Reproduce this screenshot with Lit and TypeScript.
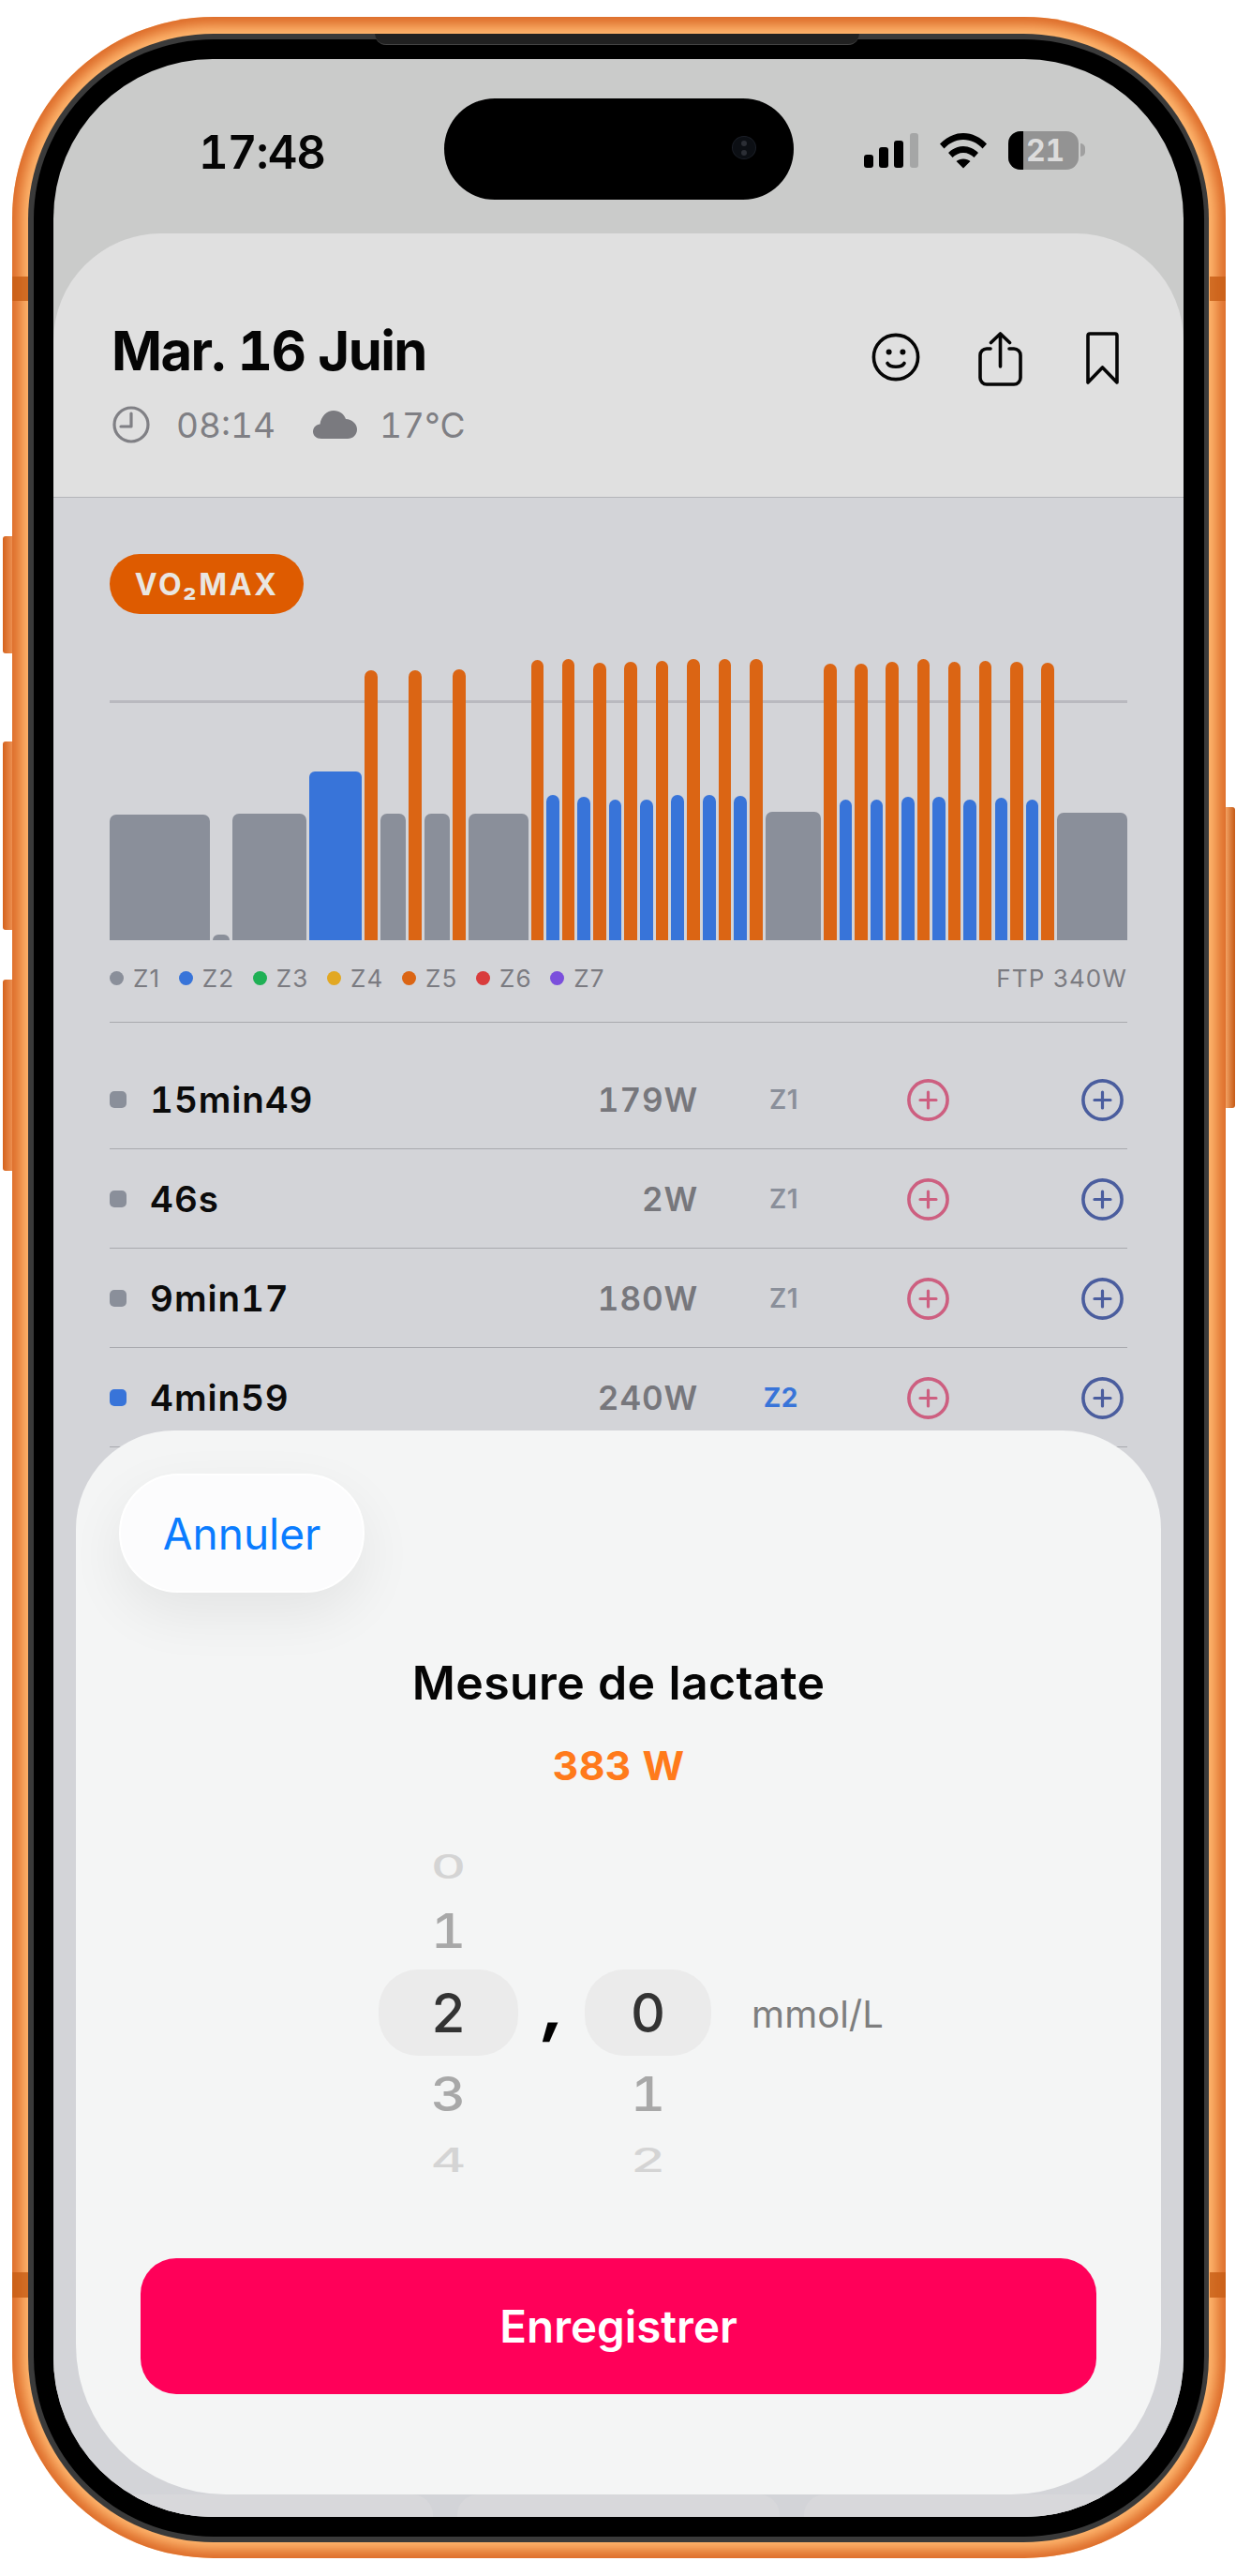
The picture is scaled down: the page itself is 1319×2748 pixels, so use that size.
import { LitElement, html, css } from "lit";
import { customElement } from "lit/decorators.js";

type Z = "g" | "b" | "o";
const BARS: [Z, number, number][] = [
  ["g",107.5,869],["g",17.8,997],["g",79.2,868],["b",55.5,823],["o",14,715],["g",27,868],["o",14,715],["g",26.7,868],["o",14,714],["g",64,868],
  ["o",13.5,704],["b",13.7,848],["o",13.5,703],["b",13.7,850],["o",13.7,707],["b",13.5,853],["o",13.7,706],["b",13.5,853],["o",13.7,705],["b",13.7,848],
  ["o",13.7,703],["b",13.7,848],["o",13.7,703],["b",13.8,849],["o",13.4,703],["g",59,866],
  ["o",14,708],["b",13.3,853],["o",13.8,708],["b",13.4,853],["o",14,706],["b",13.4,850],["o",13.5,703],["b",13.7,850],["o",13.5,706],["b",13.4,853],
  ["o",13.6,705],["b",13.4,851],["o",13.6,706],["b",13.3,853],["o",13.8,707],["g",75.6,867],
];
const LEGEND: [string, string][] = [
  ["Z1","#8a8f9a"],["Z2","#3874d9"],["Z3","#1fb055"],["Z4","#e2a823"],["Z5","#db6514"],["Z6","#d93c3c"],["Z7","#7b4fdc"],
];
const ROWS = [
  { t: "15min49", w: "179W", z: "Z1", c: "grey" },
  { t: "46s", w: "2W", z: "Z1", c: "grey" },
  { t: "9min17", w: "180W", z: "Z1", c: "grey" },
  { t: "4min59", w: "240W", z: "Z2", c: "blue" },
];

const plus = (cls: string) => html`<svg class="plus ${cls}" viewBox="0 0 45 45" width="45" height="45" fill="none" stroke="currentColor">
  <circle cx="22.5" cy="22.5" r="20.6" stroke-width="3.6"/>
  <path d="M14 22.5H31M22.5 14V31" stroke-width="3.2" stroke-linecap="round"/>
</svg>`;

@customElement("app-root")
export class AppRoot extends LitElement {
  static styles = css`
    :host { display: block; width: 1319px; height: 2748px; background: #fff; overflow: hidden; font-family: Inter, "Noto Sans", sans-serif; font-variant-numeric: tabular-nums; }
    * { box-sizing: border-box; }
    .page { position: relative; height: 2748px; padding: 18px 11px 19px 12.6px; display: flex; }
    .frame { position: relative; flex: 1; display: flex; padding: 18px 18px 17px 17px; border-radius: 215px; background: #ffb870; box-shadow: inset 0 0 14px 9px #dc6a28; }
    .ring { position: relative; flex: 1; display: flex; padding: 6px 5px 6px 6.5px; border-radius: 198px; background: #3a3a3a; }
    .bezel { flex: 1; display: flex; padding: 21px 22px 21px 21px; border-radius: 192px; background: #000; }
    .speaker { position: absolute; left: 370px; width: 517px; top: 0; height: 12px; background: #212121; border-bottom: 1px solid #444; border-radius: 0 0 18px 18px; }
    .band { position: absolute; width: 17px; background: #c75d14; opacity: .8; }
    .band.l { left: 0; } .band.r { right: 0; }
    .b1 { top: 277px; height: 26px; } .b2 { top: 2406px; height: 27px; }
    .side { position: absolute; }
    .side.l { left: 3.4px; width: 10px; border-radius: 3px 0 0 3px; background: linear-gradient(90deg, #d4621d, #ec8f50); }
    .side.r { left: 1308px; width: 10px; top: 861px; height: 321px; border-radius: 0 3px 3px 0; background: linear-gradient(90deg, #f2a264, #c65a16); }
    .s1 { top: 572px; height: 125px; } .s2 { top: 791px; height: 201px; } .s3 { top: 1045px; height: 204px; }

    .screen { position: relative; flex: 1; display: flex; flex-direction: column; border-radius: 170px; overflow: hidden; background: #cacbca; }
    .status { height: 186px; flex: none; display: flex; justify-content: space-between; padding: 75px 105px 0 155px; }
    .time { font-size: 49px; line-height: 1; height: 49px; font-weight: 600; color: #050505; letter-spacing: -1px; }
    .island { position: absolute; left: 416.5px; top: 42px; width: 373px; height: 108px; border-radius: 54px; background: #000; }
    .cam { position: absolute; left: 307.5px; top: 40px; width: 26px; height: 25px; border-radius: 50%; background: #0c0f14; border: 1px solid #1b1f27; display: flex; flex-direction: column; align-items: center; justify-content: center; gap: 4px; }
    .cam i { width: 6px; height: 6px; border-radius: 50%; background: #2b2e35; }
    .sys { display: flex; align-items: flex-start; height: 41px; margin-top: 2px; }
    .signal { display: flex; align-items: flex-end; gap: 6.5px; height: 37px; margin-top: 2px; }
    .signal i { width: 9.6px; border-radius: 3px; background: #000; }
    .signal i.off { background: #a5a6a6; }
    .wifi { margin: 2px 23px 0 23px; display: block; }
    .batt { width: 75px; height: 41px; border-radius: 13px; overflow: hidden; display: flex; background: #939393; }
    .batt i { width: 16px; background: #000; }
    .batt span { padding-left: 3px; font-size: 32px; line-height: 41px; font-weight: 700; color: #dcdcdc; letter-spacing: -.3px; }
    .nub { width: 5px; height: 14px; margin: 13px 0 0 2px; background: #a0a0a0; border-radius: 0 5px 5px 0; }

    .head { flex: none; height: 282px; padding: 0 69px 0 62px; background: #e0e0e0; border-radius: 115px 115px 0 0; border-bottom: 1.5px solid #b4b5b9; display: flex; justify-content: space-between; position: relative; }
    .date { font-size: 58px; line-height: 70px; margin-top: 90px; font-weight: 700; color: #050505; letter-spacing: -1.6px; }
    .meta { display: flex; align-items: center; margin-top: 23px; font-size: 37px; color: #7f7f84; height: 42px; }
    .meta .clock { margin: 0 28px 0 1px; }
    .meta .cloud { margin: 0 24px 0 40px; }
    .actions { display: flex; align-items: flex-start; padding-top: 106px; }
    .actions svg { display: block; }
    .a-share { margin: -1px 0 0 62px; }
    .a-book { margin: -1px 0 0 68px; }

    .content { flex: 1; background: #d3d4d8; padding: 60px 60px 0; }
    .pill { width: 207px; height: 64px; border-radius: 32px; background: #de5b00; color: #e9e6e1; font-weight: 700; font-size: 32px; letter-spacing: 2.6px; display: flex; align-items: center; justify-content: center; }
    .chart { position: relative; height: 300px; margin-top: 48px; display: flex; align-items: flex-end; gap: 3.05px; width: 1086px; }
    .ftp { position: absolute; left: 0; right: 0; top: 44px; height: 3px; background: #b9b9bf; }
    .bar { position: relative; flex-basis: 0; }
    .bar.g { background: #8a8f9a; border-radius: 7px 7px 0 0; }
    .bar.b { background: #3874d9; border-radius: 7px 7px 0 0; }
    .bar.o { background: #db6514; border-radius: 7px 7px 0 0; }
    .bar.wide.b { border-radius: 6px 6px 0 0; }
    .legend { height: 40px; margin-top: 20px; display: flex; align-items: center; font-size: 26px; letter-spacing: 1.1px; color: #7b7b81; font-variant-numeric: normal; }
    .lg { display: flex; align-items: center; gap: 10px; margin-right: 19.6px; }
    .lg i { width: 15px; height: 15px; border-radius: 50%; }
    .ftpv { margin-left: auto; }
    .rows { margin-top: 27px; border-top: 1.5px solid #a8a9ae; padding-top: 29px; }
    .row { height: 106px; border-bottom: 1.5px solid #a8a9ae; display: grid; grid-template-columns: 43px 440px 144px 109px 159.5px 186.5px; align-items: center; }
    .sq { width: 18px; height: 18px; border-radius: 5px; }
    .sq.grey { background: #8a8f9a; } .sq.blue { background: #3874d9; }
    .rt { font-size: 38.5px; font-weight: 600; color: #0b0b0b; letter-spacing: .9px; }
    .rw { font-size: 35px; font-weight: 600; color: #77777c; text-align: right; letter-spacing: .9px; margin-right: -1px; }
    .rz { font-size: 28px; font-weight: 600; text-align: right; color: #8a8f9a; padding-right: 1px; font-variant-numeric: normal; letter-spacing: .5px; }
    .rz.blue { color: #3874d9; font-weight: 700; letter-spacing: .6px; }
    .plus { display: block; justify-self: end; margin-top: 2px; }
    .plus.pink { color: #cd5f80; } .plus.navy { color: #4a5d9e; }

    .sheet { position: absolute; left: 24px; right: 24px; top: 1463px; bottom: 24px; background: #f4f5f5; border-radius: 105px 105px 160px 160px; padding: 46px 69px 0; }
    .cancel { width: 262px; height: 127px; margin-left: -23px; border-radius: 64px; background: #fcfcfd; border: 2px solid #fff; box-shadow: 0 22px 60px rgba(0,0,0,.07); display: flex; align-items: center; justify-content: center; font-size: 46px; color: #0a7cff; }
    .title { margin-top: 66px; font-size: 50px; line-height: 60px; font-weight: 600; color: #050505; text-align: center; letter-spacing: .4px; }
    .watt { margin-top: 32.5px; font-size: 43px; line-height: 50px; font-weight: 700; color: #ff7a1b; text-align: center; letter-spacing: .2px; }
    .picker { margin-top: 54.5px; height: 370px; padding-left: 254px; display: flex; }
    .wheel { display: flex; flex-direction: column; align-items: center; }
    .w1 { width: 149px; } .w2 { width: 135px; }
    .far, .near, .sel { display: flex; align-items: center; justify-content: center; width: 100%; font-size: 58px; font-weight: 500; }
    .far { height: 57px; color: #d4d4d4; overflow: hidden; }
    .far span { transform: scaleY(.6); }
    .near { height: 82px; color: #a8a8a8; }
    .near span { transform: scaleY(.88); }
    .sel { height: 92px; border-radius: 42px; background: #ebebeb; color: #333; }
    .comma { width: 71px; display: flex; align-items: center; justify-content: center; font-size: 66px; font-weight: 800; color: #000; padding: 0 0 12px 5px; height: 370px; transform: skewX(-8deg); }
    .unit { margin-left: 43px; height: 370px; display: flex; align-items: center; padding-top: 2px; font-size: 40px; color: #7e7e7e; }
    .save { margin-top: 77px; height: 145px; border-radius: 38px; background: #ff0059; color: #fff; font-size: 47.5px; font-weight: 600; display: flex; align-items: center; justify-content: center; }

    .foot { position: absolute; left: 0; right: 0; bottom: 0; height: 24px; display: flex; gap: 26px; }
    .foot i { background: #d8d8db; }
    .foot i:nth-child(1) { width: 405px; border-radius: 0 22px 0 0; }
    .foot i:nth-child(2) { width: 344px; border-radius: 22px 22px 0 0; }
    .foot i:nth-child(3) { flex: 1; border-radius: 22px 0 0 0; }
  `;

  render() {
    return html`<div class="page">
      <div class="side l s1"></div><div class="side l s2"></div><div class="side l s3"></div>
      <div class="side r"></div>
      <div class="frame">
        <div class="band l b1"></div><div class="band r b1"></div>
        <div class="band l b2"></div><div class="band r b2"></div>
        <div class="ring">
          <div class="speaker"></div>
          <div class="bezel">
            <div class="screen">
              <div class="status">
                <div class="time">17:48</div>
                <div class="sys">
                  <div class="signal">
                    <i style="height:14px"></i><i style="height:22px"></i><i style="height:29px"></i><i class="off" style="height:37px"></i>
                  </div>
                  <svg class="wifi" width="50" height="38" viewBox="0 0 50 38" fill="#000">
                    <path d="M0 11.5C6.5 4.5 15.5 0 25 0C34.5 0 43.5 4.5 50 11.5L45.5 16.5C40 10.5 33 7 25 7C17 7 10 10.5 4.5 16.5Z"/>
                    <path d="M9 21C13 17 19 14 25 14C31 14 37 17 41 21L36.5 26C33.5 23 29.5 21 25 21C20.5 21 16.5 23 13.5 26Z"/>
                    <path d="M17.5 30C19.5 28.5 22 27.5 25 27.5C28 27.5 30.5 28.5 32.5 30L25 37.5Z"/>
                  </svg>
                  <div class="batt"><i></i><span>21</span></div>
                  <div class="nub"></div>
                </div>
              </div>
              <div class="head">
                <div>
                  <div class="date">Mar. 16 Juin</div>
                  <div class="meta">
                    <svg class="clock" width="40" height="40" viewBox="0 0 40 40" fill="none" stroke="#808085" stroke-width="3.2" stroke-linecap="round" stroke-linejoin="round">
                      <circle cx="20" cy="20" r="18"/><path d="M20 8V22H9"/>
                    </svg>
                    <span>08:14</span>
                    <svg class="cloud" width="47" height="30" viewBox="0 0 47 30" fill="#7a7a7f">
                      <path d="M9 30C3.5 30 0 26.5 0 22.5C0 18 3.5 15 7.5 14.5C8.5 6 15 0 22 0C28.5 0 33 3.5 35 9C41.5 9.5 47 14 47 20C47 26 42.5 30 37 30Z"/>
                    </svg>
                    <span>17°C</span>
                  </div>
                </div>
                <div class="actions">
                  <svg width="52" height="52" viewBox="0 0 52 52" fill="none" stroke="#050505" stroke-width="3.6" stroke-linecap="round">
                    <circle cx="26" cy="26" r="23.6"/>
                    <circle cx="18.6" cy="20.5" r="3" fill="#050505" stroke="none"/><circle cx="33.4" cy="20.5" r="3" fill="#050505" stroke="none"/>
                    <path d="M17 32.5C20 37.5 32 37.5 35 32.5"/>
                  </svg>
                  <svg class="a-share" width="47" height="58" viewBox="0 0 47 58" fill="none" stroke="#050505" stroke-width="3.6" stroke-linecap="round" stroke-linejoin="round">
                    <path d="M13 18H9A7 7 0 0 0 2 25V49A7 7 0 0 0 9 56H38A7 7 0 0 0 45 49V25A7 7 0 0 0 38 18H33"/>
                    <path d="M23.5 37V2M13.5 11.5L23.5 2L33.5 11.5"/>
                  </svg>
                  <svg class="a-book" width="35" height="56" viewBox="0 0 35 56" fill="none" stroke="#050505" stroke-width="3.6" stroke-linecap="round" stroke-linejoin="round">
                    <path d="M2 4A2 2 0 0 1 4 2H31A2 2 0 0 1 33 4V54L17.5 38L2 54Z"/>
                  </svg>
                </div>
              </div>
              <div class="content">
                <div class="pill">VO₂MAX</div>
                <div class="chart">
                  <div class="ftp"></div>
                  ${BARS.map(([z, w, top]) => html`<div class="bar ${z} ${w > 30 ? "wide" : ""}" style="flex-grow:${w};height:${1003 - top}px"></div>`)}
                </div>
                <div class="legend">
                  ${LEGEND.map(([n, c]) => html`<div class="lg"><i style="background:${c}"></i>${n}</div>`)}
                  <div class="ftpv">FTP 340W</div>
                </div>
                <div class="rows">
                  ${ROWS.map((r) => html`<div class="row">
                    <div class="sq ${r.c}"></div>
                    <div class="rt">${r.t}</div>
                    <div class="rw">${r.w}</div>
                    <div class="rz ${r.c}">${r.z}</div>
                    ${plus("pink")}
                    ${plus("navy")}
                  </div>`)}
                </div>
              </div>
              <div class="foot"><i></i><i></i><i></i></div>
              <div class="sheet">
                <div class="cancel">Annuler</div>
                <div class="title">Mesure de lactate</div>
                <div class="watt">383 W</div>
                <div class="picker">
                  <div class="wheel w1">
                    <div class="far"><span>0</span></div>
                    <div class="near"><span>1</span></div>
                    <div class="sel">2</div>
                    <div class="near"><span>3</span></div>
                    <div class="far"><span>4</span></div>
                  </div>
                  <div class="comma">,</div>
                  <div class="wheel w2">
                    <div class="far"></div>
                    <div class="near"></div>
                    <div class="sel">0</div>
                    <div class="near"><span>1</span></div>
                    <div class="far"><span>2</span></div>
                  </div>
                  <div class="unit">mmol/L</div>
                </div>
                <div class="save">Enregistrer</div>
              </div>
              <div class="island"><div class="cam"><i></i><i></i></div></div>
            </div>
          </div>
        </div>
      </div>
    </div>`;
  }
}
